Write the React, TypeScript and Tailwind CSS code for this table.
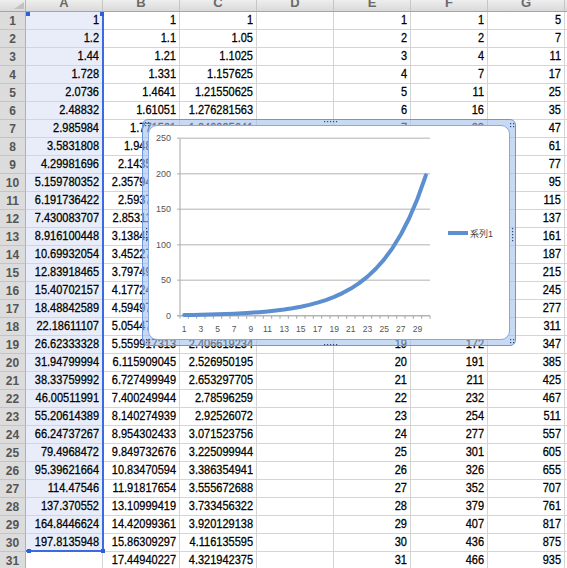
const colsA = [
  "1", "1.2", "1.44", "1.728", "2.0736", "2.48832", "2.985984", "3.5831808", "4.29981696", "5.159780352",
  "6.191736422", "7.430083707", "8.916100448", "10.69932054", "12.83918465", "15.40702157", "18.48842589",
  "22.18611107", "26.62333328", "31.94799994", "38.33759992", "46.00511991", "55.20614389", "66.24737267",
  "79.4968472", "95.39621664", "114.47546", "137.370552", "164.8446624", "197.8135948", "",
];

const colsB = [
  "1", "1.1", "1.21", "1.331", "1.4641", "1.61051", "1.771561", "1.9487171", "2.14358881", "2.357947691",
  "2.59374246", "2.853116706", "3.138428377", "3.452271214", "3.797498336", "4.177248169", "4.594972986",
  "5.054470285", "5.559917313", "6.115909045", "6.727499949", "7.400249944", "8.140274939", "8.954302433",
  "9.849732676", "10.83470594", "11.91817654", "13.10999419", "14.42099361", "15.86309297", "17.44940227",
];

const colsC = [
  "1", "1.05", "1.1025", "1.157625", "1.21550625", "1.276281563", "1.340095641", "1.407100423", "1.477455444",
  "1.551328216", "1.628894627", "1.710339358", "1.795856326", "1.885649142", "1.979931599", "2.078928179",
  "2.182874588", "2.292018318", "2.406619234", "2.526950195", "2.653297705", "2.78596259", "2.92526072",
  "3.071523756", "3.225099944", "3.386354941", "3.555672688", "3.733456322", "3.920129138", "4.116135595",
  "4.321942375",
];

const letters = ["A", "B", "C", "D", "E", "F", "G"];

const rows = colsA.map((a, i) => {
  const n = i + 1;
  return [a, colsB[i], colsC[i], "", String(n), String(1 + (n * (n - 1)) / 2), String(5 + n * (n - 1))];
});

// chart geometry (inside the white plot panel)
const y0 = 189.8;
const step = 35.5;
const xStart = 31;
const catW = 250 / 30;
const series = Array.from({ length: 30 }, (_, i) => {
  const v = Math.pow(1.2, i);
  return [xStart + (i + 0.5) * catW, y0 - (v / 50) * step];
});

const Chart = () => (
  <svg width="360" height="213" className="block font-['Liberation_Sans',sans-serif]">
    {[0, 1, 2, 3, 4, 5].map((k) => (
      <g key={k}>
        {k > 0 && (
          <line x1={28} x2={281} y1={y0 - k * step} y2={y0 - k * step} stroke="#cbcbcb" strokeWidth={1.6} />
        )}
        <text x={22} y={y0 - k * step + 3} fontSize={9} fill="#555" textAnchor="end">
          {k * 50}
        </text>
      </g>
    ))}
    <line x1={xStart} x2={xStart} y1={y0 - 5 * step} y2={y0} stroke="#a6a6a6" strokeWidth={1} />
    <line x1={28} x2={281} y1={y0} y2={y0} stroke="#b4b4b4" strokeWidth={1.4} />
    {Array.from({ length: 31 }, (_, k) => (
      <line key={k} x1={xStart + k * catW} x2={xStart + k * catW} y1={y0} y2={y0 + 3} stroke="#a6a6a6" strokeWidth={1} />
    ))}
    {Array.from({ length: 15 }, (_, k) => (
      <text key={k} x={xStart + (2 * k + 0.5) * catW} y={206} fontSize={8.5} fill="#555" textAnchor="middle">
        {2 * k + 1}
      </text>
    ))}
    <polyline
      points={series.map((p) => p.join(",")).join(" ")}
      fill="none"
      stroke="#5b8fcf"
      strokeWidth={4}
      strokeLinejoin="round"
      strokeLinecap="round"
    />
    <line x1={299} x2={319} y1={107} y2={107} stroke="#5b8fcf" strokeWidth={4} />
    <text x={321} y={110.5} fontSize={9} fill="#444" className="font-['Liberation_Sans','Noto_Sans_CJK_JP',sans-serif]">
      系列1
    </text>
  </svg>
);

// little dotted grab marks on the chart frame
const dots = (x: number, y: number, cols: number, rowsN: number) =>
  Array.from({ length: cols * rowsN }, (_, i) => (
    <rect key={`${x}-${y}-${i}`} x={x + (i % cols) * 3} y={y + Math.floor(i / cols) * 3} width={1.2} height={1.2} fill="#2d4a86" />
  ));

const Handles = () => (
  <svg width="374" height="227" className="pointer-events-none absolute left-0 top-0">
    {dots(2, 2, 2, 2)}
    {dots(181, 1, 5, 1)}
    {dots(367, 3, 2, 2)}
    {dots(369, 108, 1, 5)}
    {dots(367, 219, 2, 2)}
    {dots(181, 224, 5, 1)}
    {dots(3, 219, 2, 2)}
    {dots(3, 108, 1, 5)}
  </svg>
);

export default function App() {
  return (
    <div className="relative h-[568px] w-[567px] overflow-hidden bg-white font-['Liberation_Sans',sans-serif] text-black">
      {/* column headers */}
      <div className="flex h-[12px] border-b border-[#a5a5a5] bg-gradient-to-b from-[#eeeeee] to-[#dadada]">
        <div className="flex w-[26px] shrink-0 items-start justify-end border-r border-[#b5b5b5] pr-[1px] pt-[2px]">
          <svg width="10" height="7">
            <polygon points="10,0 10,7 0,7" fill="#c2c2c2" />
          </svg>
        </div>
        {letters.map((l) => (
          <div key={l} className="flex w-[77px] shrink-0 justify-center overflow-hidden border-r border-[#c6c6c6]">
            <span className="-mt-[3px] text-[13px] font-bold leading-[12px] text-[#6a6a6a]">{l}</span>
          </div>
        ))}
        <div className="flex-1" />
      </div>

      {/* rows */}
      {rows.map((cells, i) => (
        <div key={i} className="flex h-[18px]">
          <div className="flex w-[26px] shrink-0 items-center justify-center border-b border-r border-b-[#c4c4c4] border-r-[#b0b0b0] bg-[#dcdcdc] text-[12px] font-bold text-[#555]">
            {i + 1}
          </div>
          {cells.map((v, j) => (
            <div
              key={j}
              className={`flex w-[77px] shrink-0 items-center justify-end border-b border-r border-[#d5d5d5] pr-[3px] text-[11px] leading-none [-webkit-text-stroke:0.25px_#000] ${
                j === 0 && i < 30 ? "bg-[#e9edf9]" : ""
              }`}
            >
              <span className="inline-block scale-y-[1.12]">{v}</span>
            </div>
          ))}
          <div className="flex-1 border-b border-[#d5d5d5]" />
        </div>
      ))}

      {/* selection A1:A30 */}
      <div className="pointer-events-none absolute left-[26px] top-[12px] h-[540px] w-[78px] border-b-2 border-r-2 border-[#3a6be0]">
        <div className="absolute left-0 top-0 h-[4px] w-[4px] bg-[#2f5fd8]" />
        <div className="absolute -right-[2px] top-0 h-[4px] w-[4px] bg-[#2f5fd8]" />
        <div className="absolute -bottom-[3px] left-[1px] h-[4px] w-[4px] bg-[#2f5fd8]" />
        <div className="absolute -bottom-[3px] -right-[3px] h-[4px] w-[4px] bg-[#2f5fd8]" />
      </div>

      {/* embedded chart */}
      <div className="absolute left-[142px] top-[119px] h-[227px] w-[374px] rounded-[6px] border border-[#6f96dc] bg-[#a3bfeb]/60 p-[5px]">
        <div className="h-full w-full overflow-hidden rounded-[9px] border border-[#86a8e4] bg-white">
          <Chart />
        </div>
        <Handles />
      </div>
    </div>
  );
}
